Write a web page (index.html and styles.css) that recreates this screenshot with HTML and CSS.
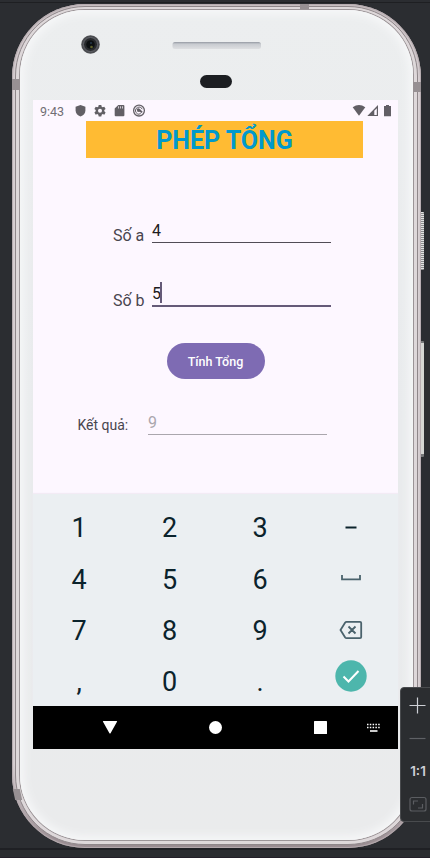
FILE: index.html
```html
<!DOCTYPE html>
<html lang="vi">
<head>
<meta charset="utf-8">
<title>Phép tổng</title>
<link rel="stylesheet" href="styles.css">
</head>
<body>
<div class="desk">
  <div class="phone">
    <i class="side power"></i><i class="side volume"></i>
    <i class="band band-top"></i><i class="band band-left"></i><i class="band band-right"></i><i class="band band-low"></i>
    <div class="rim"><div class="face">
      <header class="hardware">
        <svg width="392" height="90" viewBox="20 10 392 90">
          <defs><linearGradient id="grille" x1="0" y1="0" x2="0" y2="1"><stop offset="0" stop-color="#9499a2"/><stop offset=".3" stop-color="#c8cbd0"/><stop offset="1" stop-color="#dedfe1"/></linearGradient></defs>
          <circle cx="90.500" cy="44.500" r="9.300" fill="#4b4c50"/>
          <circle cx="90.500" cy="44.500" r="7" fill="#292b2e" stroke="#62646a" stroke-width="1"/>
          <circle cx="90.500" cy="44.500" r="4.300" fill="#0d1012"/>
          <circle cx="91.500" cy="47" r="1.300" fill="#5e612b"/>
          <circle cx="91" cy="43" r="1" fill="#243749"/>
          <rect x="172.500" y="42" width="88.500" height="7" rx="2.500" fill="url(#grille)"/>
          <rect x="200" y="75" width="32" height="13" rx="6.500" fill="#1c1e22"/>
        </svg>
      </header>
      <main class="screen">
        <div class="status">
          <span class="clock">9:43</span>
          <svg class="status-left" width="72" height="14" viewBox="74 104 72 14" fill="#625f65">
            <path d="M80.500 105l4.900 1.800v3.700c0 2.800-2 5.100-4.900 6-2.900-.9-4.900-3.200-4.900-6v-3.700z"/>
            <path fill-rule="evenodd" d="M98.700 105h2.600l.4 1.700 1 .6 1.600-.6 1.300 2.200-1.300 1.200v1.200l1.300 1.200-1.300 2.200-1.600-.6-1 .6-.4 1.700h-2.600l-.4-1.700-1-.6-1.600.6-1.300-2.200 1.300-1.200v-1.200l-1.300-1.200 1.300-2.200 1.600.6 1-.6zM100 108.700a2 2 0 1 0 0 4 2 2 0 0 0 0-4z"/>
            <path d="M118.300 105h5.100q1 0 1 1v9.300q0 1-1 1h-7.700q-1 0-1-1v-6.700z"/>
            <path d="M118.500 106.300v2.200m2-2.200v2.200m2-2.200v2.200" stroke="#fdf7ff" stroke-width=".7"/>
            <circle cx="139" cy="110.600" r="5.400" fill="none" stroke="#625f65" stroke-width="1.300"/>
            <path d="M140.800 113.700a3.600 3.600 0 1 1 1.500-4.500" fill="none" stroke="#625f65" stroke-width="1"/>
            <path d="M136.500 109.200q1.800-1.800 3.400-.2l2.800 2.800-1 1.200-2.300-1.200-1.700.3z"/>
          </svg>
          <svg class="status-right" width="41" height="14" viewBox="352 104 41 14" fill="#625f65">
            <path d="M352.700 107.200q6.300-4.300 12.600 0l-6.300 8.600z"/>
            <path d="M367.300 116l10.700-11v11z"/><path d="M374.300 110.800l2.500-2.600v6.700h-2.500z" fill="#fdf7ff"/>
            <path d="M386 105h3v1h2v10.200h-7V106h2z"/>
          </svg>
        </div>
        <h1>PHÉP TỔNG</h1>
        <div class="row row-a"><label>Số a</label><div class="field">4</div></div>
        <div class="row row-b"><label>Số b</label><div class="field focused">5<i class="caret"></i></div></div>
        <button>Tính Tổng</button>
        <div class="row row-r"><label>Kết quả:</label><div class="field hint">9</div></div>
        <div class="keyboard">
          <span>1</span><span>2</span><span>3</span>
          <span><svg width="32" height="32" viewBox="0 0 32 32"><path d="M10.500 15.500h11" stroke="#0b232c" stroke-width="2"/></svg></span>
          <span>4</span><span>5</span><span>6</span>
          <span><svg width="32" height="32" viewBox="0 0 32 32"><path d="M7 12v4.300h18V12" fill="none" stroke="#4a626c" stroke-width="1.800"/></svg></span>
          <span>7</span><span>8</span><span>9</span>
          <span><svg width="32" height="32" viewBox="0 0 32 32"><path d="M11.500 7.800H25q1.200 0 1.200 1.200v14q0 1.200-1.200 1.200H11.500q-.8 0-1.300-.7L5.500 16l4.700-7.500q.5-.7 1.300-.7zM13.500 12.500l7 7m0-7l-7 7" fill="none" stroke="#4a626c" stroke-width="1.800"/></svg></span>
          <span>,</span><span>0</span><span>.</span>
          <span><svg class="done" width="32" height="32" viewBox="0 0 32 32"><circle cx="16" cy="16" r="15.700" fill="#4db6ac"/><path d="M8.500 16.500l5 5L23.500 11" fill="none" stroke="#fff" stroke-width="2"/></svg></span>
        </div>
        <nav>
          <svg width="365" height="43" viewBox="33 706 365 43" fill="#fff">
            <path d="M103.500 721h13q1 0 .5.800l-6.300 11.200q-.7 1-1.400 0L103 721.800q-.5-.8.500-.8z"/>
            <circle cx="215.500" cy="727.500" r="6.500"/><rect x="314" y="721" width="13" height="13" rx=".5"/>
            <path d="M367 724.500h14M367 727.500h14" stroke="#fff" stroke-width="1.700" stroke-dasharray="1.500 1.300"/><path d="M370 731h7.500" stroke="#fff" stroke-width="1.600"/>
          </svg>
        </nav>
      </main>
    </div></div>
  </div>
  <i class="edge edge-top"></i><i class="edge edge-bottom"></i>
  <aside class="zoom">
    <svg width="32" height="20" viewBox="0 0 32 20"><path d="M8.500 9.500h16M16.500 1.500v16" stroke="#ced0d6" stroke-width="1.200"/></svg>
    <svg width="32" height="20" viewBox="0 0 32 20"><path d="M8.500 9.500h16" stroke="#5f6165" stroke-width="1.200"/></svg>
    <b>1:1</b>
    <svg width="32" height="20" viewBox="0 0 32 20"><g fill="none" stroke="#5b5d61" stroke-width="1.200"><rect x="9" y="2.500" width="16" height="13.500" rx="2"/><path d="M12.500 9.500V6h4.500M21.500 9v4H17"/></g></svg>
  </aside>
</div>
</body>
</html>
```
FILE: styles.css
```css
* { box-sizing: border-box; }
body { margin: 0; background: #2b2d31; font-family: Roboto, sans-serif; }
.desk { position: relative; width: 430px; height: 858px; overflow: hidden; padding: 4px 9px 10px 12px; }
.edge { position: absolute; left: 0; width: 100%; height: 1px; background: #1e1f22; }
.edge-top { top: 2px; }
.edge-bottom { top: 848px; height: 10px; background: linear-gradient(#1f2024 0 2px, #2b2d31 2px 9px, #24202a 9px); }
.phone { position: relative; height: 844px; padding: 2px 3px 3px; border-radius: 73px; background: linear-gradient(#c9c1c4, #d8d0d3 10%, #d8d0d3 90%, #96898e); box-shadow: inset 0 0 1px 1px #b5aaae; }
.rim { height: 100%; padding: 3px 4px 4px; border: 1px solid #8f878a; border-radius: 70px; background: #ded8da; }
.face { height: 100%; border-radius: 65px; background: linear-gradient(#eceeef, #e9ebed 50%, #eaebec); box-shadow: 0 0 0 1px #9b9497, inset 0 0 8px 4px #f6f7f8; }
.hardware { height: 90px; }
.hardware svg { display: block; }
.side { position: absolute; right: -3px; width: 3px; border-radius: 0 1px 1px 0; }
.power { top: 208px; height: 58px; background: repeating-linear-gradient(#e3e3e3 0 1px, #8c8d8e 1px 2px); }
.volume { top: 337px; height: 116px; background: #d5d6d3; border-top: 2px solid #77787a; border-bottom: 3px solid #77787a; }
.band { position: absolute; z-index: 1; background: #979093; }
.band-top { left: 288px; top: 0; width: 9px; height: 5px; }
.band-left { left: 0; top: 75px; width: 8px; height: 11px; }
.band-right { right: 0; top: 78px; width: 8px; height: 10px; }
.band-low { left: 2px; top: 785px; width: 7px; height: 11px; transform: skewX(12deg); }
.screen { position: relative; z-index: 2; display: flex; flex-direction: column; width: 365px; height: 649px; margin-left: 13px; background: #fdf7ff; color: #49454f; }
.status { display: flex; align-items: flex-start; height: 21px; padding: 4px 5px 0 7px; }
.clock { width: 34px; font-size: 12.5px; line-height: 15px; color: #716e74; }
.status-right { margin-left: auto; }
h1 { width: 277px; height: 37px; margin: 0 0 0 53px; background: #ffbb33; color: #0099cc; font-size: 25px; line-height: 40px; font-weight: 700; text-align: center; white-space: nowrap; }
.row { display: flex; align-items: flex-start; white-space: nowrap; }
.row label { font-size: 16px; line-height: 20px; padding-top: 8px; }
.field { width: 179px; height: 25px; border-bottom: 1px solid #514c56; font-size: 16px; line-height: 25px; color: #1d1b20; }
.row-a { height: 64px; margin-top: 60px; padding-left: 80px; }
.row-a label, .row-b label { width: 39px; }
.row-b { height: 61px; padding-left: 80px; }
.row-b label { padding-top: 9px; }
.focused { display: flex; line-height: 23px; border-bottom: 2px solid #655a78; }
.caret { width: 2px; height: 21px; background: #655a78; margin-left: -1px; }
button { width: 98px; height: 36px; flex: none; margin: 0 0 0 133.500px; padding: 1px 0 0; border: 0; border-radius: 18px; background: #7e6bb3; color: #fff; font: 500 12.500px Roboto, sans-serif; }
.row-r { height: 80px; margin-top: 31px; padding-left: 44.500px; }
.row-r label { width: 70.500px; font-size: 14px; padding-top: 5px; }
.hint { border-color: #aaa6ad; color: #aaa6ad; }
.keyboard { display: grid; grid-template-columns: repeat(4, 90.400px); grid-template-rows: repeat(4, 51.400px); height: 212px; margin-top: auto; padding: 8px 0 0 1.500px; flex: none; background: #ebeff2; box-shadow: 0 -1px 1px #f3ebf5; color: #0b232c; font-size: 27px; }
.keyboard span { display: flex; align-items: center; justify-content: center; }
.keyboard span:not(:nth-child(4n)) { padding: 1px 1px 0 0; }
.done { position: relative; top: -6px; }
nav { height: 43px; flex: none; background: #000; }
nav svg { display: block; }
.zoom { position: absolute; z-index: 3; left: 400px; top: 687px; width: 36px; height: 135px; border: 1px solid #494b4e; border-radius: 4px; background: #2b2d30; display: flex; flex-direction: column; align-items: flex-start; padding-top: 8px; }
.zoom svg { flex: none; margin-bottom: 13px; }
.zoom b { width: 34px; height: 20px; margin: -1px 0 14px; text-align: center; font: 600 13.500px/20px Inter, sans-serif; color: #ced0d6; }
```
